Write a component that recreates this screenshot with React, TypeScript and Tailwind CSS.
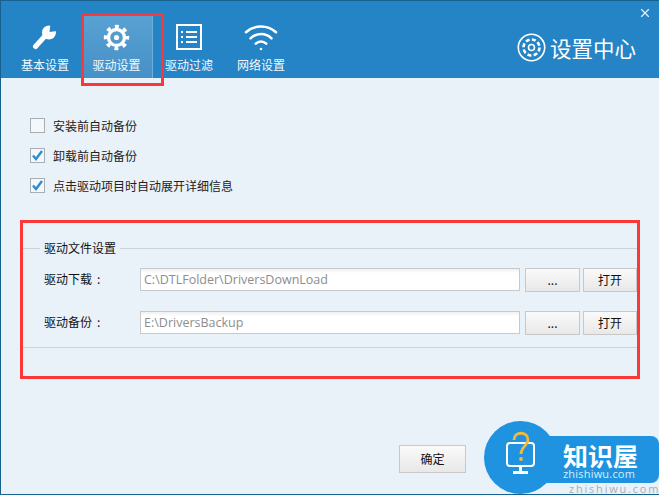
import { Wifi, X } from 'lucide-react';

const cjk = { fontFamily: '"Noto Sans CJK SC", sans-serif' };
const latin = { fontFamily: '"Open Sans", sans-serif' };

function Tab({ label, active, children }: { label: string; active?: boolean; children: React.ReactNode }) {
  return (
    <div className={`w-[72px] h-[65px] flex flex-col items-center ${active ? 'bg-gradient-to-b from-[#5aa2d2] to-[#4590c8] border-r border-[#6db0da]' : ''}`}>
      <div className="h-[36px] mt-[6px] flex items-center justify-center text-white">{children}</div>
      <span className="mt-[2px] text-[12px] leading-[16px] text-[#f2f8fc]">{label}</span>
    </div>
  );
}

function CheckRow({ label, checked }: { label: string; checked?: boolean }) {
  return (
    <div className="h-[15px] flex items-center">
      <div className="w-[15px] h-[15px] border border-[#a6aeb6] bg-[#f4f8fb] flex items-center justify-center">
        {checked && (
          <svg width="11" height="11" viewBox="0 0 11 11" fill="none" stroke="#2f8ccb" strokeWidth="2.4">
            <path d="M1 5.5l3 3.5 6-8" />
          </svg>
        )}
      </div>
      <span className="ml-[8px] text-[12px] text-[#222]">{label}</span>
    </div>
  );
}

function Btn({ w, h, children }: { w: string; h: string; children: React.ReactNode }) {
  return (
    <button className={`${w} ${h} shrink-0 border border-[#c8c8c8] bg-gradient-to-b from-[#fafafa] to-[#e8e8e8] text-[12px] text-[#111] flex items-center justify-center`}>
      {children}
    </button>
  );
}

function PathRow({ label, value }: { label: string; value: string }) {
  return (
    <div className="flex items-start h-[24px]">
      <span className="w-[96px] h-[22px] leading-[22px] text-[12px] text-[#111]">
        {label}
        <span className="ml-[5px]">:</span>
      </span>
      <div className="w-[380px] h-[23px] border border-[#c9c9c9] bg-gradient-to-b from-[#f0f0f0] to-white to-[20%] px-[3px] text-[12.5px] leading-[21px] text-[#8d8d8d]" style={latin}>
        {value}
      </div>
      <div className="ml-[5px]"><Btn w="w-[55px]" h="h-[24px]">...</Btn></div>
      <div className="ml-[3px]"><Btn w="w-[54px]" h="h-[24px]">打开</Btn></div>
    </div>
  );
}

export default function App() {
  return (
    <div className="relative w-[659px] h-[495px] overflow-hidden bg-[#e9f1f9] border-l border-t border-b border-[#17618f]" style={cjk}>
      {/* Header */}
      <div className="h-[77px] bg-[#2484c6] flex items-end pl-[8px] relative">
        <div className="flex">
          <Tab label="基本设置">
            <svg width="26" height="26" viewBox="0 0 26 26">
              <path d="M3.5 22.5L13 12" stroke="white" strokeWidth="5" strokeLinecap="round" />
              <circle cx="17" cy="8.5" r="7" fill="white" />
              <path d="M17.5 8L18.5 0H26L25 7Z" fill="#2484c6" />
            </svg>
          </Tab>
          <Tab label="驱动设置" active>
            <svg width="27" height="27" viewBox="0 0 27 27" fill="none" stroke="white">
              <circle cx="13.5" cy="13.5" r="8" strokeWidth="3.4" />
              <circle cx="13.5" cy="13.5" r="11" strokeWidth="3.4" strokeDasharray="4 4.64" strokeDashoffset="2" />
              <circle cx="13.5" cy="13.5" r="2.6" fill="white" stroke="none" />
            </svg>
          </Tab>
          <Tab label="驱动过滤">
            <svg width="26" height="26" viewBox="0 0 26 26" fill="none" stroke="white" strokeWidth="2">
              <rect x="1" y="1" width="24" height="24" />
              <path d="M5 8h2M10 8h11M5 13h2M10 13h11M5 18h2M10 18h11" />
            </svg>
          </Tab>
          <Tab label="网络设置">
            <Wifi size={36} strokeWidth={1.7} />
          </Tab>
        </div>
        <X size={14} strokeWidth={2} className="absolute right-[7px] top-[5px] text-[#e8f3fa]" />
        <div className="absolute left-[516px] top-[32px] flex items-center">
          <svg width="29" height="29" viewBox="0 0 29 29" fill="none" stroke="white">
            <circle cx="14.5" cy="14.5" r="13.2" strokeWidth="1.6" />
            <circle cx="14.5" cy="14.5" r="8" strokeWidth="2.6" strokeDasharray="4 2.3" />
            <circle cx="14.5" cy="14.5" r="3" strokeWidth="1.6" />
          </svg>
          <span className="ml-[4px] text-[21.5px] leading-[29px] text-white">设置中心</span>
        </div>
      </div>

      {/* Options */}
      <div className="pl-[29px] pt-[40px] flex flex-col gap-[15px]">
        <CheckRow label="安装前自动备份" />
        <CheckRow label="卸载前自动备份" checked />
        <CheckRow label="点击驱动项目时自动展开详细信息" checked />
      </div>

      {/* Driver file settings */}
      <div className="mt-[47px] ml-[21px] w-[618px] h-[108px] border-b border-[#cdd3da]">
        <div className="flex items-center h-[16px]">
          <div className="w-[18px] h-px bg-[#cdd3da]" />
          <span className="px-[4px] text-[12px] text-[#111]">驱动文件设置</span>
          <div className="flex-1 h-px bg-[#cdd3da]" />
        </div>
        <div className="pl-[22px] pt-[12px] pb-[2px] flex flex-col gap-[19px] border-r border-[#dde2e8]">
          <PathRow label="驱动下载" value="C:\DTLFolder\DriversDownLoad" />
          <PathRow label="驱动备份" value="E:\DriversBackup" />
        </div>
      </div>

      {/* Footer */}
      <div className="absolute left-[398px] top-[444px]">
        <Btn w="w-[67px]" h="h-[28px]">确定</Btn>
      </div>

      {/* Red annotations */}
      <div className="absolute left-[80px] top-[12px] w-[83px] h-[73px] border-[3px] border-[#fb3838]" />
      <div className="absolute left-[19px] top-[219px] w-[620px] h-[159px] border-[3px] border-[#fb3838]" />

      {/* Watermark */}
      <div className="absolute left-[483px] top-[420px] w-[175px] h-[74px] overflow-hidden">
        <div className="absolute left-[60px] top-[15px] w-[115px] h-[47px] rounded-r-[8px] bg-[#1f93e0]" />
        <div className="absolute left-0 top-0 w-[73px] h-[73px] rounded-full bg-[#1f93e0]" />
        <svg className="absolute left-[21px] top-[10px]" width="32" height="44" viewBox="0 0 32 44" fill="none">
          <rect x="2" y="12" width="27" height="23" rx="3" stroke="white" strokeWidth="2" />
          <path d="M15.5 35v5" stroke="white" strokeWidth="3" />
          <path d="M8 41.5h15" stroke="white" strokeWidth="3" />
          <path d="M9 9c0-9 14-9 14 0 0 6-7 6-7 14" stroke="#f4b93a" strokeWidth="2.8" />
          <circle cx="16" cy="28" r="1.9" fill="#f4b93a" />
        </svg>
        <div className="absolute left-[79px] top-[21px] flex flex-col items-start">
          <span className="text-[25px] leading-[26px] font-bold text-white">知识屋</span>
          <span className="text-[11px] leading-[12px] tracking-[0.2px] text-[#d8eefb]" style={latin}>zhishiwu.com</span>
        </div>
        <span className="absolute left-[85px] top-[62px] text-[11px] leading-[12px] tracking-[1.8px] text-[#a9b0b5] whitespace-nowrap" style={latin}>zhishiwu.com</span>
      </div>
    </div>
  );
}
